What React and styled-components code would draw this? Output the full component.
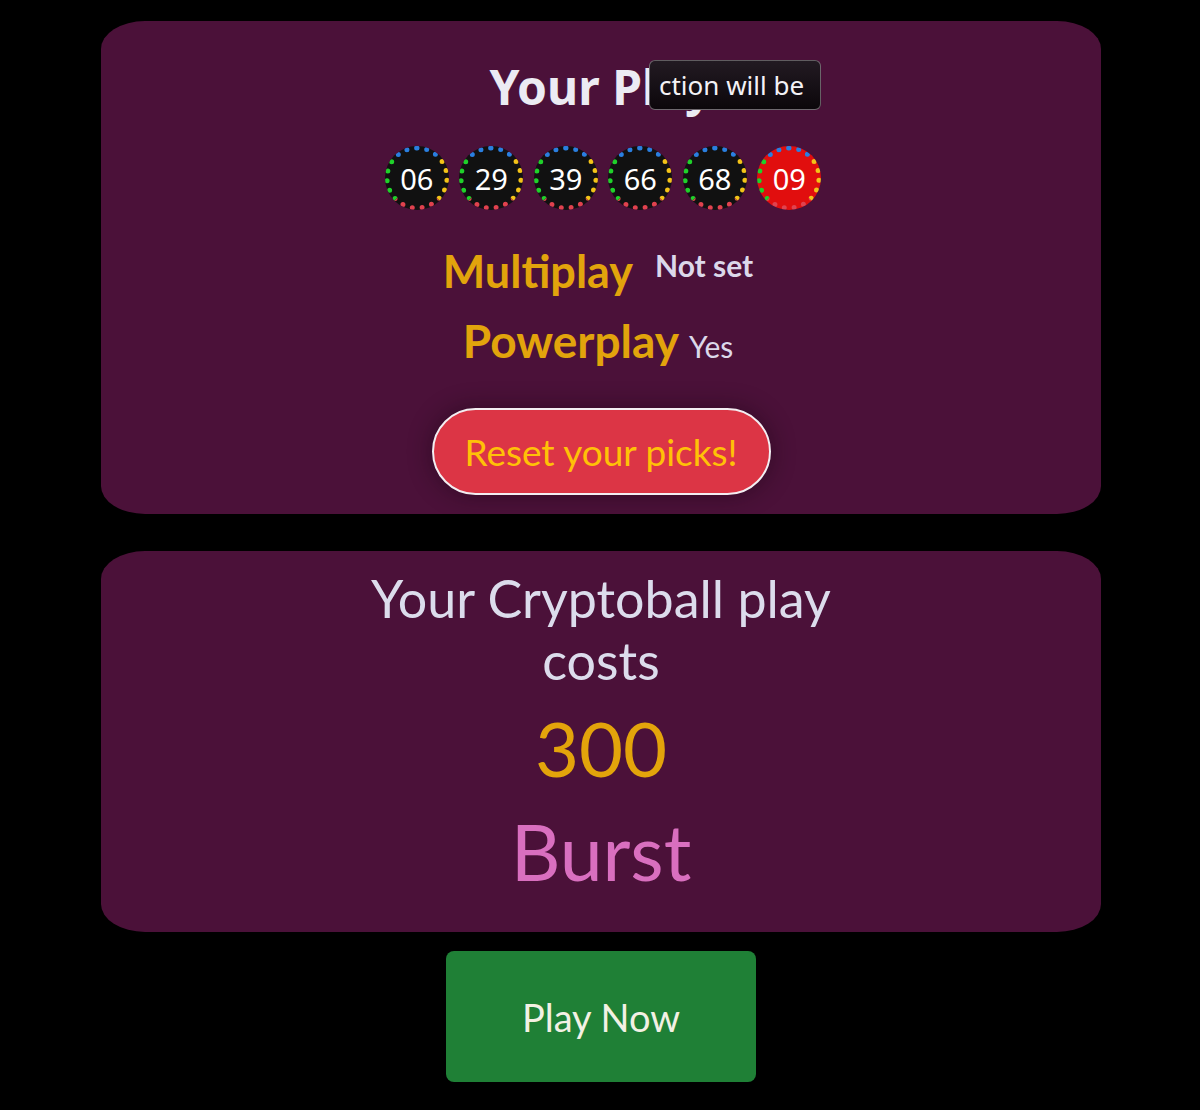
import React from "react";
import styled, { createGlobalStyle } from "styled-components";

const Global = createGlobalStyle`
  html, body { margin: 0; padding: 0; background: #000; }
  body { font-family: "Lato", "Noto Sans", sans-serif; }
`;

const Page = styled.div`
  width: 1000px;
  margin: 0 auto;
  padding: 21px 0 28px 2px;
  display: flex;
  flex-direction: column;
  align-items: center;
`;

const Card = styled.section`
  position: relative;
  box-sizing: border-box;
  width: 1000px;
  height: ${(p) => p.$h}px;
  background: #4b1139;
  border-radius: 44px / 28px;
  display: flex;
  flex-direction: column;
  align-items: center;
  padding-top: ${(p) => p.$pt}px;
  margin-bottom: ${(p) => p.$mb}px;
`;

const Title = styled.h2`
  margin: 0;
  font-family: "Noto Sans", "Open Sans", sans-serif;
  font-weight: 700;
  font-size: 48px;
  line-height: 56px;
  color: #ecebf3;
`;

/* hover hint that sits over the heading, its text cut off by the box */
const Tooltip = styled.div`
  position: absolute;
  left: 548px;
  top: 39px;
  width: 172px;
  height: 50px;
  box-sizing: border-box;
  overflow: hidden;
  white-space: nowrap;
  padding: 0 0 0 9px;
  border: 1px solid rgba(255, 255, 255, 0.35);
  border-radius: 6px;
  background: linear-gradient(180deg, #221a22 0%, #0c070b 100%);
  color: #f4f2f6;
  font-family: "Noto Sans", "Open Sans", sans-serif;
  font-size: 26px;
  line-height: 48px;
`;

const Balls = styled.div`
  display: flex;
  gap: 10.5px;
  margin-top: 31px;
  margin-left: 4px;
`;

const Ball = styled.div`
  box-sizing: border-box;
  width: 64px;
  height: 64px;
  border-radius: 50%;
  border: 5px dotted;
  border-color: #2a7fe0 #f3c318 #e0424e #1fd12a;
  background: ${(p) => (p.$power ? "#e10e0e" : "#111")};
  display: flex;
  align-items: center;
  justify-content: center;
  color: #fff;
  font-family: "Noto Sans", "Open Sans", sans-serif;
  font-size: 29px;
  font-weight: 400;
`;

const InfoRow = styled.div`
  display: flex;
  align-items: ${(p) => p.$align};
  gap: ${(p) => p.$gap}px;
  margin-top: ${(p) => p.$mt}px;
  margin-right: 6px;
`;

const Label = styled.span`
  color: #e2a40c;
  font-weight: 700;
  font-size: ${(p) => p.$size}px;
  line-height: 52px;
`;

const Value = styled.span`
  color: #dcd8ea;
  font-weight: ${(p) => p.$weight};
  font-size: ${(p) => p.$size}px;
  line-height: ${(p) => p.$lh}px;
  margin-top: ${(p) => p.$offset || 0}px;
`;

const ResetButton = styled.button`
  margin-top: 38px;
  width: 339px;
  height: 87px;
  border-radius: 44px;
  border: 2px solid #f3eef2;
  background: #dc3545;
  color: #ffc107;
  font-family: "Lato", "Noto Sans", sans-serif;
  font-size: 37px;
  box-shadow: 0 0 24px rgba(20, 0, 14, 0.45);
  cursor: pointer;
`;

const CostText = styled.h3`
  margin: 0;
  width: 500px;
  text-align: center;
  font-weight: 400;
  font-size: 52px;
  line-height: 62px;
  color: #dcdcec;
`;

const Amount = styled.div`
  color: #e3a40b;
  font-size: 76px;
  line-height: 90px;
  margin-top: 12px;
`;

const Currency = styled.div`
  color: #d96fbf;
  font-size: 77px;
  line-height: 100px;
  margin-top: 8px;
`;

const PlayButton = styled.button`
  width: 310px;
  height: 131px;
  border: none;
  border-radius: 8px;
  background: #1f8036;
  color: #f3f1e4;
  font-family: "Lato", "Noto Sans", sans-serif;
  font-size: 38px;
  cursor: pointer;
`;

const picks = ["06", "29", "39", "66", "68"];

export default function App() {
  return (
    <>
      <Global />
      <Page>
        <Card $h={493} $pt={38} $mb={37}>
          <Title>Your Play</Title>
          <Tooltip>ction will be</Tooltip>
          <Balls>
            {picks.map((n) => (
              <Ball key={n}>{n}</Ball>
            ))}
            <Ball $power>09</Ball>
          </Balls>
          <InfoRow $align="flex-start" $gap={22} $mt={35}>
            <Label $size={45}>Multiplay</Label>
            <Value $weight={700} $size={30} $lh={30} $offset={5}>
              Not set
            </Value>
          </InfoRow>
          <InfoRow $align="baseline" $gap={10} $mt={18}>
            <Label $size={46}>Powerplay</Label>
            <Value $weight={400} $size={30} $lh={48}>
              Yes
            </Value>
          </InfoRow>
          <ResetButton>Reset your picks!</ResetButton>
        </Card>
        <Card $h={381} $pt={16} $mb={19}>
          <CostText>Your Cryptoball play costs</CostText>
          <Amount>300</Amount>
          <Currency>Burst</Currency>
        </Card>
        <PlayButton>Play Now</PlayButton>
      </Page>
    </>
  );
}
